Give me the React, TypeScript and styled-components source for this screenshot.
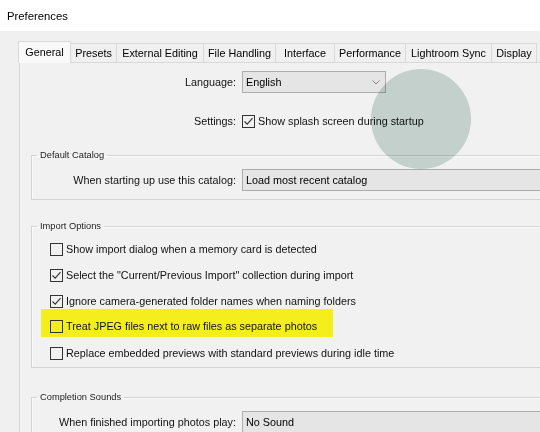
import React from "react";
import styled, { createGlobalStyle } from "styled-components";

const GlobalStyle = createGlobalStyle`
  html, body {
    margin: 0;
    padding: 0;
    background: #f0f0f0;
    overflow: hidden;
  }
  body {
    font-family: "Liberation Sans", Arial, sans-serif;
    font-size: 10.8px;
    color: #111;
  }
`;

const Window = styled.div`
  position: relative;
  width: 640px;
  height: 432px;
  overflow: hidden;
  background: #f0f0f0;
`;

const TitleBar = styled.div`
  height: 31px;
  display: flex;
  align-items: center;
  padding-left: 7px;
  background: #fff;
  font-size: 11.3px;
  color: #000;
`;

const Body = styled.div`
  padding-top: 10px;
`;

const TabRow = styled.div`
  position: relative;
  z-index: 1;
  display: flex;
  align-items: flex-end;
  height: 21px;
  margin-left: 18px;
`;

const Tab = styled.div<{ $w: number; $active?: boolean }>`
  box-sizing: border-box;
  flex: none;
  width: ${(p) => p.$w}px;
  height: ${(p) => (p.$active ? 22 : 19)}px;
  margin-bottom: ${(p) => (p.$active ? -1 : 0)}px;
  margin-right: -1px;
  display: flex;
  align-items: center;
  justify-content: center;
  padding-bottom: ${(p) => (p.$active ? 2 : 0)}px;
  border: 1px solid #d9d9d9;
  border-bottom: none;
  background: ${(p) => (p.$active ? "#f9f9f9" : "#f0f0f0")};
  color: #000;
  white-space: nowrap;
`;

const Panel = styled.div`
  margin-left: 19px;
  height: 380px;
  padding-top: 8px;
  border-top: 1px solid #d9d9d9;
  border-left: 1px solid #d9d9d9;
  background: #f1f1f1;
`;

const FormGrid = styled.div<{ $label: number }>`
  display: grid;
  grid-template-columns: ${(p) => p.$label}px 1fr;
  column-gap: 6px;
  row-gap: 17px;
  align-items: center;
  padding-right: 8px;
`;

const Label = styled.div`
  text-align: right;
  color: #111;
  white-space: nowrap;
`;

const Select = styled.div<{ $w?: number }>`
  box-sizing: border-box;
  width: ${(p) => (p.$w ? `${p.$w}px` : "auto")};
  height: 22px;
  display: flex;
  align-items: center;
  justify-content: space-between;
  padding: 0 5px 0 3px;
  border: 1px solid #adadad;
  background: #e5e5e5;
  color: #000;
  white-space: nowrap;
`;

const Group = styled.fieldset<{ $top: number; $pad: string }>`
  margin: ${(p) => p.$top}px 10px 0 11px;
  padding: ${(p) => p.$pad};
  min-width: 0;
  border: 1px solid #d4d4d4;
  box-shadow: 1px 1px 0 #fbfbfb inset;
`;

const Legend = styled.legend`
  margin-left: 5px;
  padding: 0 3px;
  font-size: 9.3px;
  line-height: 12px;
  color: #222;
`;

const OptionList = styled.div`
  display: flex;
  flex-direction: column;
  align-items: flex-start;
  padding-left: 18px;
`;

const OptionRow = styled.div<{ $mark?: boolean }>`
  box-sizing: border-box;
  display: flex;
  align-items: center;
  gap: 3px;
  height: ${(p) => (p.$mark ? 28 : 26)}px;
  padding: ${(p) => (p.$mark ? "6px 16px 0 9px" : "0")};
  margin: ${(p) => (p.$mark ? "-5px 0 3px -9px" : "0")};
  background: ${(p) => (p.$mark ? "#f4ef1c" : "transparent")};
  color: #111;
  white-space: nowrap;
`;

const InlineCheck = styled.div`
  display: flex;
  align-items: center;
  gap: 3px;
  height: 22px;
  white-space: nowrap;
`;

const Box = styled.span`
  box-sizing: border-box;
  flex: none;
  width: 13px;
  height: 13px;
  display: flex;
  align-items: center;
  justify-content: center;
  border: 1px solid #333;
`;

const Spot = styled.div`
  position: absolute;
  z-index: 2;
  left: 371px;
  top: 69px;
  width: 100px;
  height: 100px;
  border-radius: 50%;
  background: #cfdcd7;
  mix-blend-mode: multiply;
  pointer-events: none;
`;

function Check({ on }: { on?: boolean }) {
  return (
    <Box>
      {on && (
        <svg width="11" height="11" viewBox="0 0 11 11">
          <polyline points="1.5,5.5 4.2,8.2 9.5,2.2" fill="none" stroke="#333" strokeWidth="1.1" />
        </svg>
      )}
    </Box>
  );
}

function Chevron() {
  return (
    <svg width="8" height="5" viewBox="0 0 8 5">
      <polyline points="0.5,0.5 4,4 7.5,0.5" fill="none" stroke="#888" strokeWidth="1" />
    </svg>
  );
}

const tabs: [string, number][] = [
  ["General", 53],
  ["Presets", 47],
  ["External Editing", 88],
  ["File Handling", 73],
  ["Interface", 60],
  ["Performance", 72],
  ["Lightroom Sync", 87],
  ["Display", 46],
];

const importOptions = [
  { text: "Show import dialog when a memory card is detected", on: false },
  { text: "Select the \"Current/Previous Import\" collection during import", on: true },
  { text: "Ignore camera-generated folder names when naming folders", on: true },
  { text: "Treat JPEG files next to raw files as separate photos", on: false, mark: true },
  { text: "Replace embedded previews with standard previews during idle time", on: false },
];

export default function App() {
  return (
    <>
      <GlobalStyle />
      <Window>
        <TitleBar>Preferences</TitleBar>
        <Body>
          <TabRow>
            {tabs.map(([name, w], i) => (
              <Tab key={name} $w={w} $active={i === 0}>
                {name}
              </Tab>
            ))}
          </TabRow>
          <Panel>
            <FormGrid $label={216}>
              <Label>Language:</Label>
              <Select $w={144}>
                English
                <Chevron />
              </Select>
              <Label>Settings:</Label>
              <InlineCheck>
                <Check on />
                Show splash screen during startup
              </InlineCheck>
            </FormGrid>

            <Group $top={17} $pad="8px 0 8px 0">
              <Legend>Default Catalog</Legend>
              <FormGrid $label={204}>
                <Label>When starting up use this catalog:</Label>
                <Select>Load most recent catalog</Select>
              </FormGrid>
            </Group>

            <Group $top={20} $pad="4px 0 1px 0">
              <Legend>Import Options</Legend>
              <OptionList>
                {importOptions.map((o) => (
                  <OptionRow key={o.text} $mark={o.mark}>
                    <Check on={o.on} />
                    {o.text}
                  </OptionRow>
                ))}
              </OptionList>
            </Group>

            <Group $top={23} $pad="8px 0 8px 0">
              <Legend>Completion Sounds</Legend>
              <FormGrid $label={204}>
                <Label>When finished importing photos play:</Label>
                <Select>No Sound</Select>
              </FormGrid>
            </Group>
          </Panel>
        </Body>
        <Spot />
      </Window>
    </>
  );
}
